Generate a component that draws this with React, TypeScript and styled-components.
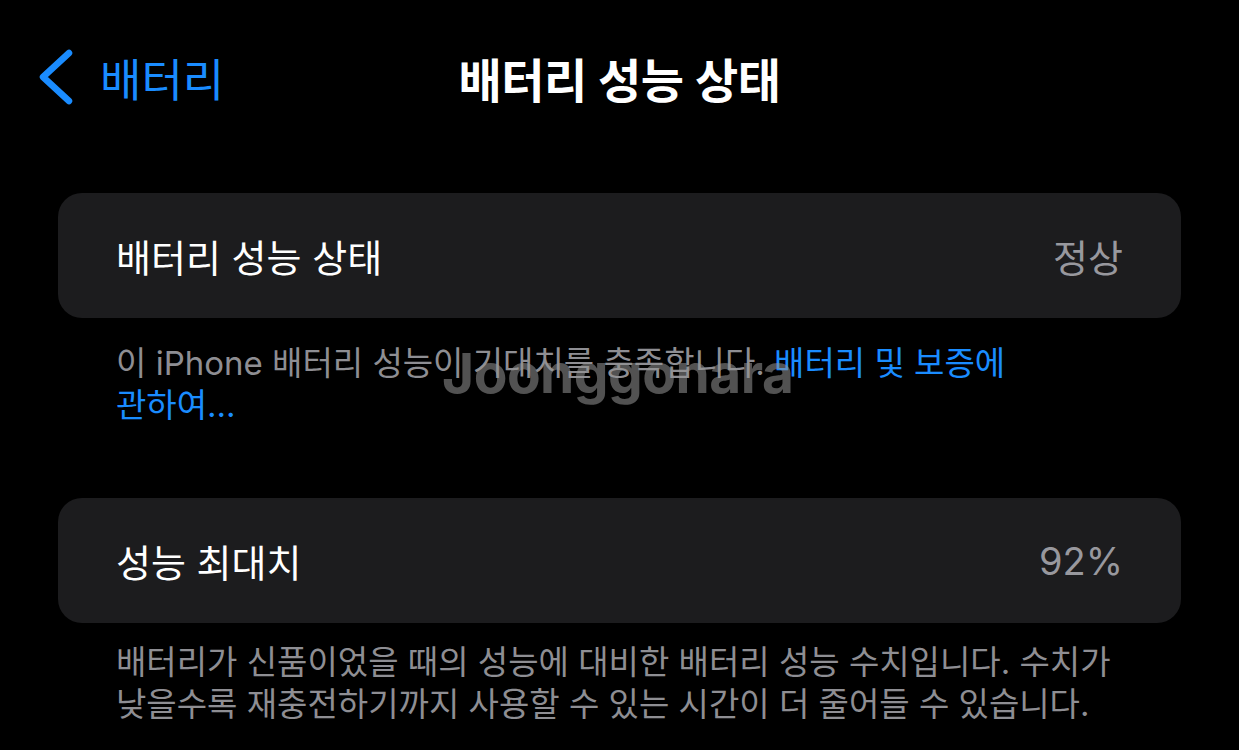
import React from "react";
import styled, { createGlobalStyle } from "styled-components";

const GlobalStyle = createGlobalStyle`
  html, body {
    margin: 0;
    padding: 0;
    background: #000;
  }
  body {
    font-family: Inter, "Noto Sans CJK KR", sans-serif;
    -webkit-font-smoothing: antialiased;
  }
`;

const Screen = styled.div`
  position: relative;
  width: 1239px;
  height: 750px;
  overflow: hidden;
  background: #000;
  color: #fff;
  display: flex;
  flex-direction: column;
`;

const NavBar = styled.header`
  height: 154px;
  display: grid;
  grid-template-columns: 1fr auto 1fr;
  align-items: center;
  padding: 0 38px;
`;

const BackButton = styled.button`
  justify-self: start;
  display: flex;
  align-items: center;
  gap: 26px;
  background: none;
  border: 0;
  padding: 0;
  color: #1a8cff;
  font-family: inherit;
  font-size: 45px;
  font-weight: 400;
  cursor: pointer;
`;

const Title = styled.h1`
  margin: 0;
  font-size: 47px;
  font-weight: 600;
  letter-spacing: -0.5px;
  color: #fff;
`;

const Section = styled.section<{ $top: number }>`
  margin-top: ${(p) => p.$top}px;
  padding: 0 58px;
`;

const Cell = styled.div`
  height: 125px;
  display: flex;
  align-items: center;
  justify-content: space-between;
  padding: 0 58px;
  border-radius: 24px;
  background: #1c1c1e;
`;

const Label = styled.span`
  font-size: 38px;
  color: #fff;
`;

const Value = styled.span`
  font-size: 38px;
  color: #98989e;
`;

const Footer = styled.p<{ $gap: number }>`
  margin: ${(p) => p.$gap}px 0 0;
  padding: 0 116px;
  font-size: 33px;
  line-height: 42px;
  color: #8e8e93;
  white-space: nowrap;
`;

const Link = styled.a`
  color: #1a8cff;
  text-decoration: none;
`;

const Watermark = styled.div`
  position: absolute;
  left: 442px;
  top: 340px;
  font-family: Inter, sans-serif;
  font-size: 55px;
  font-weight: 700;
  letter-spacing: -0.5px;
  color: rgba(150, 150, 150, 0.55);
  pointer-events: none;
`;

function Chevron() {
  return (
    <svg width="36" height="56" viewBox="0 0 36 56" fill="none">
      <path
        d="M31 4 L5 28 L31 52"
        stroke="#1a8cff"
        strokeWidth="6.5"
        strokeLinecap="round"
        strokeLinejoin="round"
      />
    </svg>
  );
}

export default function App() {
  return (
    <Screen>
      <GlobalStyle />
      <NavBar>
        <BackButton>
          <Chevron />
          배터리
        </BackButton>
        <Title>배터리 성능 상태</Title>
        <span />
      </NavBar>

      <Section $top={39}>
        <Cell>
          <Label>배터리 성능 상태</Label>
          <Value>정상</Value>
        </Cell>
      </Section>
      <Footer $gap={24}>
        이 iPhone 배터리 성능이 기대치를 충족합니다. <Link>배터리 및 보증에</Link>
        <br />
        <Link>관하여...</Link>
      </Footer>

      <Section $top={72}>
        <Cell>
          <Label>성능 최대치</Label>
          <Value>92%</Value>
        </Cell>
      </Section>
      <Footer $gap={18}>
        배터리가 신품이었을 때의 성능에 대비한 배터리 성능 수치입니다. 수치가
        <br />
        낮을수록 재충전하기까지 사용할 수 있는 시간이 더 줄어들 수 있습니다.
      </Footer>

      <Watermark>Joonggonara</Watermark>
    </Screen>
  );
}
